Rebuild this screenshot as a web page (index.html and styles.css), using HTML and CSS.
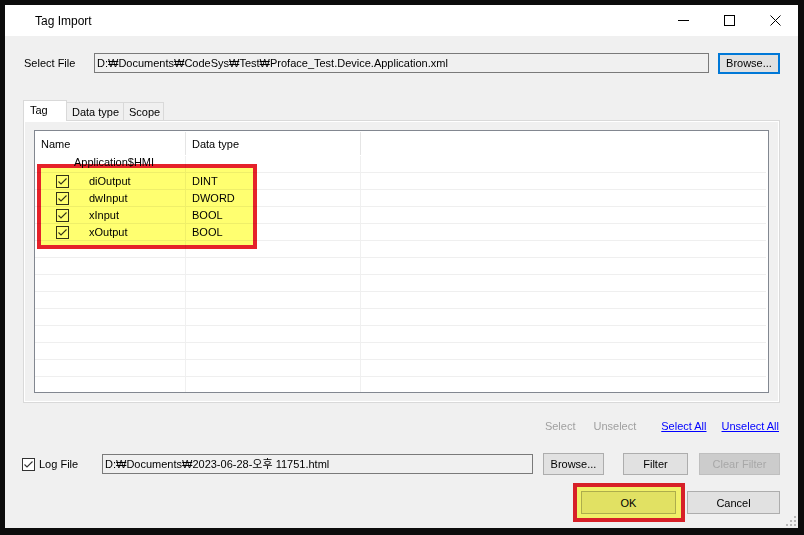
FILE: index.html
```html
<!DOCTYPE html>
<html lang="en">
<head>
    <meta charset="UTF-8">
    <title>Tag Import</title>
    <link rel="stylesheet" href="styles.css">
</head>
<body>

    <div class="window">
        <div class="titlebar">
            <span class="title">Tag Import</span>
            <div class="caption">
                <div class="cap-btn">
                    <svg width="11" height="11" viewBox="0 0 11 11"><line x1="0" y1="5.5" x2="11" y2="5.5" stroke="#000"/></svg>
                </div>
                <div class="cap-btn">
                    <svg width="11" height="11" viewBox="0 0 11 11"><rect x="0.5" y="0.5" width="10" height="10" fill="none" stroke="#000"/></svg>
                </div>
                <div class="cap-btn">
                    <svg width="11" height="11" viewBox="0 0 11 11"><path d="M0.5 0.5 L10.5 10.5 M10.5 0.5 L0.5 10.5" stroke="#000"/></svg>
                </div>
            </div>
        </div>

        <!-- file row -->
        <div class="file-row">
            <span class="label">Select File</span>
            <div class="textbox path">D:₩Documents₩CodeSys₩Test₩Proface_Test.Device.Application.xml</div>
            <button class="btn focused">Browse...</button>
        </div>

        <!-- tabs -->
        <div class="tabs">
            <div class="tab active">Tag</div>
            <div class="tab">Data type</div>
            <div class="tab">Scope</div>
        </div>
        <div class="tab-page">
            <div class="listview">
                <div class="lv-head">
                    <div class="cell">Name</div>
                    <div class="cell">Data type</div>
                    <div class="cell"></div>
                </div>
                <div id="lv-body"></div>
                <div class="mark list-mark"></div>
            </div>
        </div>

        <div class="select-links">
            <span class="disabled">Select</span>
            <span class="disabled unsel">Unselect</span>
            <a href="#" class="sel-all">Select All</a>
            <a href="#" class="unsel-all">Unselect All</a>
        </div>

        <div class="log-row">
            <svg class="chk log-chk" width="13" height="13" viewBox="0 0 13 13"><rect x="0.5" y="0.5" width="12" height="12" fill="#fff" stroke="#333"/><path d="M2.5 6.5 L5 9 L10.5 3.5" fill="none" stroke="#333" stroke-width="1.1"/></svg>
            <span class="log-label">Log File</span>
            <div class="textbox log-path">D:₩Documents₩2023-06-28-오후 11751.html</div>
            <button class="btn browse2">Browse...</button>
            <button class="btn filter">Filter</button>
            <button class="btn clear" disabled>Clear Filter</button>
        </div>

        <div class="dialog-buttons">
            <span class="ok-wrap">
                <button class="btn ok">OK</button>
                <span class="mark ok-mark"></span>
            </span>
            <button class="btn cancel">Cancel</button>
        </div>

        <svg class="grip" width="10" height="10" viewBox="0 0 10 10">
            <rect x="8" y="0" width="2" height="2" fill="#b8b8b8"/>
            <rect x="4" y="4" width="2" height="2" fill="#b8b8b8"/>
            <rect x="8" y="4" width="2" height="2" fill="#b8b8b8"/>
            <rect x="0" y="8" width="2" height="2" fill="#b8b8b8"/>
            <rect x="4" y="8" width="2" height="2" fill="#b8b8b8"/>
            <rect x="8" y="8" width="2" height="2" fill="#b8b8b8"/>
        </svg>
    </div>

    <script>
        // tag list
        const tags = [
            { name: 'diOutput', type: 'DINT' },
            { name: 'dwInput', type: 'DWORD' },
            { name: 'xInput', type: 'BOOL' },
            { name: 'xOutput', type: 'BOOL' }
        ];
        const check = '<svg class="chk" width="13" height="13" viewBox="0 0 13 13"><rect x="0.5" y="0.5" width="12" height="12" fill="#fff" stroke="#333"/><path d="M2.5 6.5 L5 9 L10.5 3.5" fill="none" stroke="#333" stroke-width="1.1"/></svg>';
        const body = document.getElementById('lv-body');

        let html = '<div class="lv-row group"><div class="cell"><span class="group-name">Application$HMI</span></div><div class="cell"></div><div class="cell"></div></div>';
        tags.forEach(t => {
            html += `<div class="lv-row">
                <div class="cell">${check}<span class="tag-name">${t.name}</span></div>
                <div class="cell type">${t.type}</div>
                <div class="cell"></div>
            </div>`;
        });
        // empty rows to fill the list
        for (let i = 0; i < 10; i++) {
            html += '<div class="lv-row"><div class="cell"></div><div class="cell"></div><div class="cell"></div></div>';
        }
        body.innerHTML = html;
    </script>
</body>
</html>
```

FILE: styles.css
```css
body {
    margin: 0;
    background-color: #0c0c0c;
    font-family: "Liberation Sans", Arial, "Noto Sans CJK KR", sans-serif;
    font-size: 11px;
    color: #000;
}

.window {
    position: relative;
    margin: 5px 0 0 5px;
    width: 793px;
    height: 523px;
    background-color: #f0f0f0;
    overflow: hidden;
}

/* title bar */
.titlebar {
    display: flex;
    align-items: center;
    height: 31px;
    background-color: #fff;
    font-size: 12px;
}

.titlebar .title {
    margin-left: 30px;
    flex: 1;
}

.caption {
    display: flex;
}

.cap-btn {
    width: 46px;
    height: 31px;
    display: flex;
    align-items: center;
    justify-content: center;
}

/* controls */
.textbox {
    box-sizing: border-box;
    height: 20px;
    border: 1px solid #7a7a7a;
    background-color: #f0f0f0;
    padding-left: 2px;
    line-height: 18px;
    white-space: nowrap;
    overflow: hidden;
}

.btn {
    box-sizing: border-box;
    font-family: inherit;
    font-size: 11px;
    color: #000;
    background-color: #e1e1e1;
    border: 1px solid #adadad;
    padding: 0;
    margin: 0;
}

.btn.focused {
    border: 2px solid #0078d7;
}

/* file row */
.file-row {
    display: flex;
    align-items: center;
    margin-top: 17px;
    padding-left: 19px;
    height: 20px;
}

.file-row .label {
    width: 70px;
}

.file-row .path {
    width: 615px;
}

.file-row .btn {
    margin-left: 9px;
    width: 62px;
    height: 21px;
}

/* tabs */
.tabs {
    display: flex;
    align-items: flex-end;
    margin-top: 27px;
    padding-left: 18px;
    height: 20px;
}

.tab {
    box-sizing: border-box;
    height: 18px;
    line-height: 18px;
    padding: 0 5px;
    border: 1px solid #d9d9d9;
    border-bottom: none;
    background-color: #f0f0f0;
    white-space: nowrap;
}

.tab + .tab {
    border-left: none;
}

.tab.active {
    position: relative;
    height: 21px;
    width: 44px;
    line-height: 18px;
    margin-bottom: -1px;
    padding-left: 6px;
    background-color: #fff;
    border-color: #d9d9d9;
}

.tab:nth-child(2) {
    width: 57px;
}

.tab:nth-child(3) {
    width: 40px;
}

.tab-page {
    box-sizing: border-box;
    margin: 0 18px;
    height: 283px;
    border: 1px solid #d9d9d9;
    box-shadow: inset 0 0 0 1px #fff;
    padding: 9px 10px;
}

/* list view */
.listview {
    position: relative;
    box-sizing: border-box;
    height: 263px;
    border: 1px solid #828790;
    background-color: #fff;
    overflow: hidden;
}

.lv-head, .lv-row {
    display: grid;
    grid-template-columns: 151px 175px 1fr;
}

.lv-head {
    height: 25px;
}

.lv-head .cell {
    line-height: 25px;
    padding-left: 6px;
}

.lv-head .cell:nth-child(1), .lv-head .cell:nth-child(2) {
    border-right: 1px solid #e5e5e5;
    height: 23px;
    margin-top: 1px;
    line-height: 24px;
}

.lv-row {
    box-sizing: border-box;
    height: 17px;
    border-bottom: 1px solid #efefef;
    margin-right: 2px;
}

.lv-row .cell {
    display: flex;
    align-items: center;
    white-space: nowrap;
}

.lv-row .cell:nth-child(1), .lv-row .cell:nth-child(2) {
    border-right: 1px solid #f0f0f0;
}

.lv-row .cell.type {
    padding-left: 6px;
}

.group .cell {
    align-items: flex-start;
}

.group-name {
    margin-left: 39px;
    line-height: 12px;
}

.chk {
    margin-left: 21px;
    flex-shrink: 0;
}

.tag-name {
    margin-left: 20px;
}

/* red / yellow annotation marks */
.mark {
    position: absolute;
    box-sizing: border-box;
    border: 4px solid #e5222a;
    background-color: #ffff70;
    mix-blend-mode: multiply;
}

.list-mark {
    left: 2px;
    top: 33px;
    width: 220px;
    height: 85px;
}

/* select links */
.select-links {
    display: flex;
    justify-content: flex-end;
    align-items: center;
    margin-top: 15px;
    padding-right: 19px;
    height: 16px;
}

.select-links .disabled {
    color: #a0a0a0;
}

.select-links .unsel {
    margin-left: 18px;
}

.select-links a {
    color: #0000ff;
    text-decoration: underline;
}

.select-links .sel-all {
    margin-left: 25px;
}

.select-links .unsel-all {
    margin-left: 15px;
}

/* log row */
.log-row {
    display: flex;
    align-items: center;
    margin-top: 19px;
    padding-left: 17px;
    height: 22px;
}

.log-chk {
    margin-left: 0;
}

.log-label {
    margin-left: 4px;
    width: 63px;
}

.log-path {
    width: 431px;
}

.log-row .btn {
    height: 22px;
}

.browse2 {
    margin-left: 10px;
    width: 61px;
}

.filter {
    margin-left: 19px;
    width: 65px;
}

.clear {
    margin-left: 11px;
    width: 81px;
    background-color: #cccccc;
    border-color: #bfbfbf;
    color: #a8a8a8 !important;
}

/* ok / cancel */
.dialog-buttons {
    display: flex;
    justify-content: flex-end;
    margin-top: 16px;
    padding-right: 18px;
    height: 23px;
}

.ok-wrap {
    position: relative;
    display: flex;
}

.ok {
    width: 95px;
    height: 23px;
}

.ok-mark {
    left: -8px;
    top: -8px;
    right: -9px;
    bottom: -8px;
}

.cancel {
    margin-left: 11px;
    width: 93px;
    height: 23px;
}

.grip {
    position: absolute;
    right: 2px;
    bottom: 2px;
}
```
